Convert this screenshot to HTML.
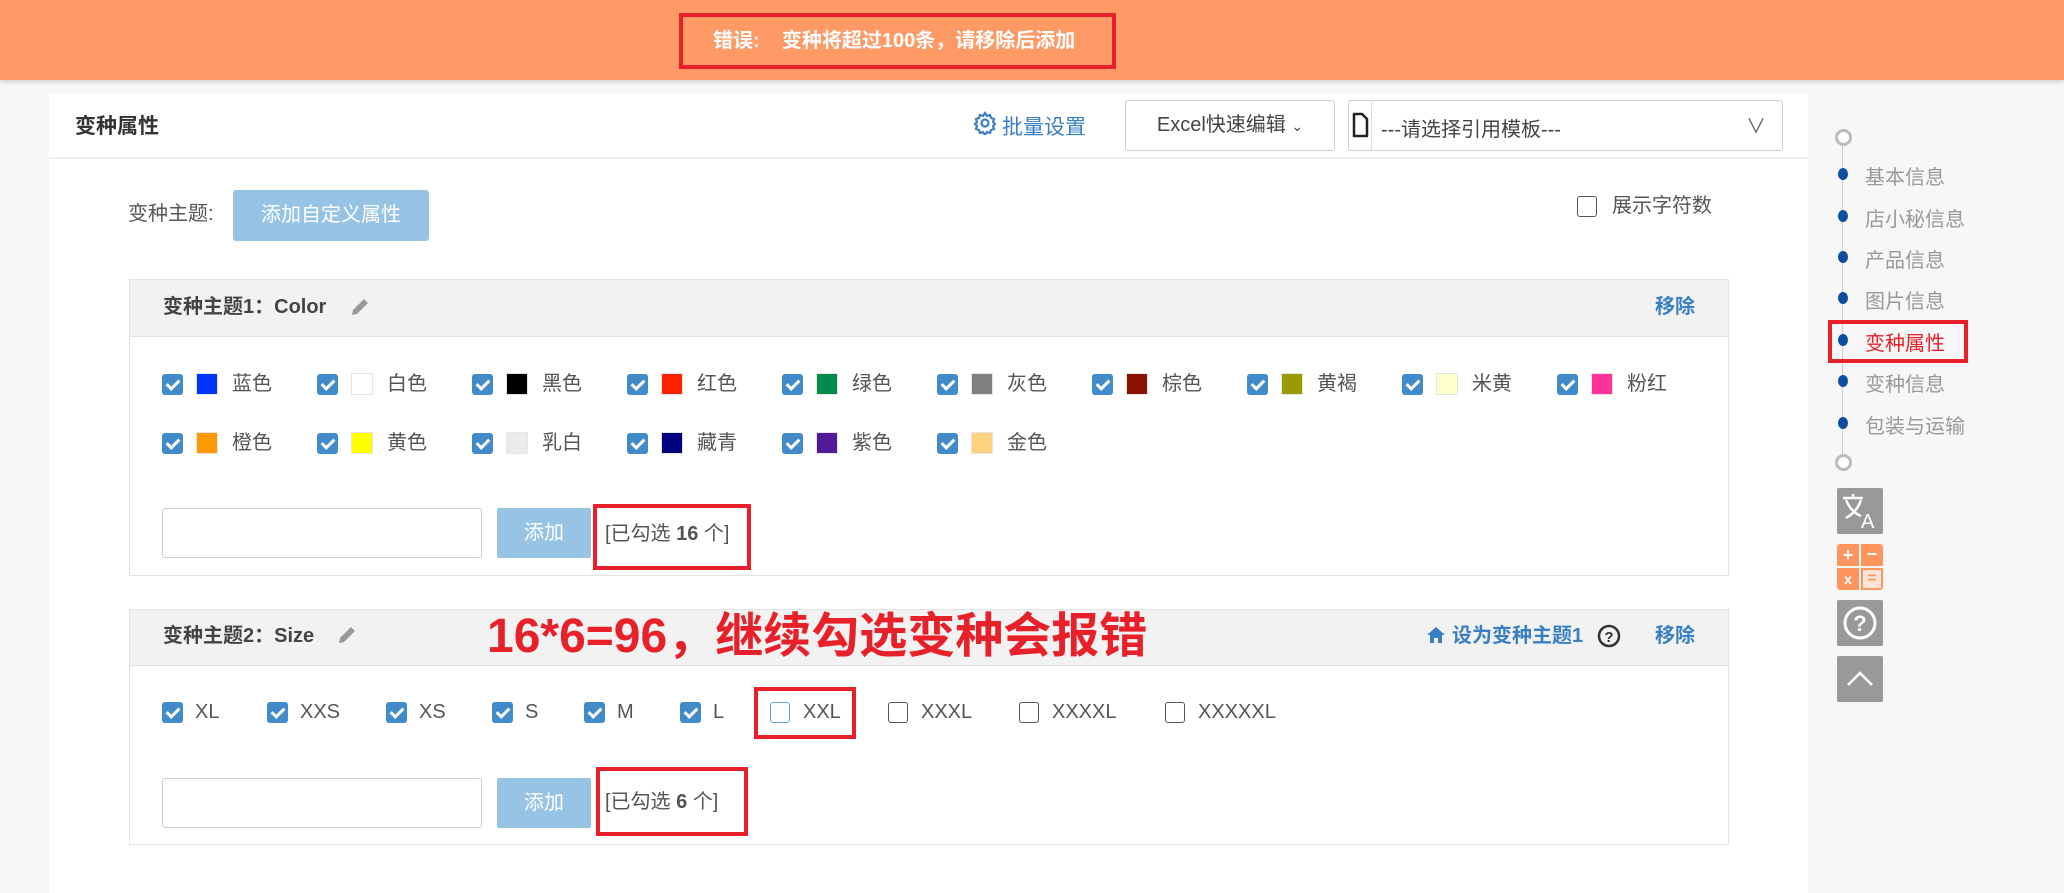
<!DOCTYPE html>
<html><head><meta charset="utf-8"><style>
*{box-sizing:border-box;margin:0;padding:0}
body{width:2064px;height:875px;overflow:hidden;background:#f7f7f7;font-family:"Liberation Sans","Noto Sans CJK SC",sans-serif;color:#555;position:relative}
.a{position:absolute;white-space:nowrap}
.top{left:0;top:0;width:2064px;height:80px;background:#ff9966;box-shadow:0 2px 4px rgba(0,0,0,.15)}
.err{left:679px;top:13px;width:437px;height:56px;border:4px solid #e8202a;color:#fff;font-size:20px;line-height:48px;padding-left:30px;font-weight:bold}
.panel{left:49px;top:93px;width:1759px;height:800px;background:#fff}
.cb{position:absolute;width:21px;height:21px;border-radius:3px;background:#428bca}
.cb::after{content:"";position:absolute;left:7px;top:3px;width:5px;height:10px;border:solid #fff;border-width:0 3px 3px 0;transform:rotate(45deg)}
.ub{position:absolute;width:20px;height:21px;border:1.5px solid #555;border-radius:3px;background:#fff}
.sw{position:absolute;width:22px;height:22px;border:1px solid #e5e5e5}
.t{position:absolute;font-size:20px;color:#555;line-height:22px}
.sec{position:absolute;border:1px solid #e3e3e3;background:#fff}
.sh{position:absolute;left:0;top:0;right:0;background:#f2f2f2;border-bottom:1px solid #e3e3e3}
.blue{color:#3a7fc4}
.inp{position:absolute;width:320px;height:50px;border:1px solid #ccc;border-radius:3px}
.btn{position:absolute;width:94px;height:50px;background:#97c4e4;color:#fff;font-size:20px;text-align:center;line-height:50px;border-radius:2px}
.red{position:absolute;border:4px solid #e8202a}
.nav{position:absolute;font-size:20px;color:#999}
.dot{position:absolute;width:10px;height:12px;border-radius:50%;background:#0d4f9e}
.ic{position:absolute;left:1837px;width:46px;height:46px;background:#999;border-radius:2px}
</style></head><body>
<div class="a top"></div>
<div class="a err">错误:&nbsp;&nbsp;&nbsp; 变种将超过100条，请移除后添加</div>
<div class="a panel"></div>
<div class="a" style="left:49px;top:157px;width:1759px;height:2px;background:#eee"></div>
<div class="a" style="left:75px;top:110px;font-size:21px;font-weight:bold;color:#333">变种属性</div>
<svg class="a" style="left:973px;top:111px" width="24" height="24" viewBox="0 0 24 24" fill="none" stroke="#3a7fc4" stroke-width="2.2"><circle cx="12" cy="12" r="3.5"/><path d="M12 2l2 3 3-1 1 3 3 1-1 3 2 2-2 2 1 3-3 1-1 3-3-1-2 3-2-3-3 1-1-3-3-1 1-3-2-2 2-2-1-3 3-1 1-3 3 1z"/></svg>
<div class="a blue" style="left:1002px;top:111px;font-size:21px">批量设置</div>
<div class="a" style="left:1125px;top:100px;width:210px;height:51px;border:1px solid #ccc;border-radius:3px;font-size:20px;color:#444;line-height:49px;text-align:center">Excel快速编辑 <span style="font-size:14px">&#8964;</span></div>
<div class="a" style="left:1348px;top:100px;width:435px;height:51px;border:1px solid #ccc;border-radius:3px"></div>
<div class="a" style="left:1371px;top:100px;width:1px;height:51px;background:#ddd"></div>
<svg class="a" style="left:1350px;top:111px" width="20" height="28" viewBox="0 0 20 28"><path d="M4 3h8l5 5v17H4z" fill="none" stroke="#222" stroke-width="2.5" stroke-linejoin="round"/></svg>
<div class="a" style="left:1381px;top:113px;font-size:20px;color:#444">---请选择引用模板---</div>
<div class="a" style="left:1746px;top:110px;font-size:20px;color:#666">∨</div>

<div class="t" style="left:128px;top:203px;color:#555">变种主题:</div>
<div class="a" style="left:233px;top:190px;width:196px;height:51px;background:#97c4e4;border-radius:3px;color:#fff;font-size:20px;line-height:51px;text-align:center">添加自定义属性</div>
<div class="ub" style="left:1577px;top:196px"></div>
<div class="t" style="left:1612px;top:195px">展示字符数</div>

<div class="sec" style="left:129px;top:279px;width:1600px;height:297px">
<div class="sh" style="height:57px"></div>
</div>
<div class="a" style="left:163px;top:295px;font-size:20px;font-weight:bold;color:#444;line-height:24px">变种主题1：Color</div>
<svg class="a" style="left:349px;top:296px" width="22" height="22" viewBox="0 0 22 22"><path d="M3 19l1-5L15 3l4 4L8 18z" fill="#999"/></svg>
<div class="a blue" style="left:1655px;top:295px;font-size:20px;font-weight:bold;line-height:24px">移除</div>

<div class="sec" style="left:129px;top:609px;width:1600px;height:236px">
<div class="sh" style="height:56px"></div>
</div>
<div class="a" style="left:163px;top:624px;font-size:20px;font-weight:bold;color:#444;line-height:24px">变种主题2：Size</div>
<svg class="a" style="left:336px;top:624px" width="22" height="22" viewBox="0 0 22 22"><path d="M3 19l1-5L15 3l4 4L8 18z" fill="#999"/></svg>
<div class="a" style="left:487px;top:606px;font-size:48px;line-height:62px;font-weight:bold;color:#e8202a">16*6=96，继续勾选变种会报错</div>
<svg class="a" style="left:1425px;top:624px" width="22" height="22" viewBox="0 0 22 22"><path d="M2 11L11 3l9 8h-3v8h-4v-5h-4v5H5v-8z" fill="#3a7fc4"/></svg>
<div class="a blue" style="left:1452px;top:624px;font-size:20px;font-weight:bold;line-height:24px">设为变种主题1</div>
<svg class="a" style="left:1597px;top:624px" width="24" height="24" viewBox="0 0 24 24"><circle cx="12" cy="12" r="10" fill="none" stroke="#333" stroke-width="2.5"/><text x="12" y="18" font-size="15" font-weight="bold" text-anchor="middle" fill="#333" font-family="Liberation Sans">?</text></svg>
<div class="a blue" style="left:1655px;top:624px;font-size:20px;font-weight:bold;line-height:24px">移除</div>

<div class="cb" style="left:162px;top:374px"></div><div class="sw" style="left:196px;top:373px;background:#0033ff"></div><div class="t" style="left:232px;top:373px">蓝色</div>
<div class="cb" style="left:317px;top:374px"></div><div class="sw" style="left:351px;top:373px;background:#fff"></div><div class="t" style="left:387px;top:373px">白色</div>
<div class="cb" style="left:472px;top:374px"></div><div class="sw" style="left:506px;top:373px;background:#000"></div><div class="t" style="left:542px;top:373px">黑色</div>
<div class="cb" style="left:627px;top:374px"></div><div class="sw" style="left:661px;top:373px;background:#ff2200"></div><div class="t" style="left:697px;top:373px">红色</div>
<div class="cb" style="left:782px;top:374px"></div><div class="sw" style="left:816px;top:373px;background:#008c4a"></div><div class="t" style="left:852px;top:373px">绿色</div>
<div class="cb" style="left:937px;top:374px"></div><div class="sw" style="left:971px;top:373px;background:#7f7f7f"></div><div class="t" style="left:1007px;top:373px">灰色</div>
<div class="cb" style="left:1092px;top:374px"></div><div class="sw" style="left:1126px;top:373px;background:#8b1100"></div><div class="t" style="left:1162px;top:373px">棕色</div>
<div class="cb" style="left:1247px;top:374px"></div><div class="sw" style="left:1281px;top:373px;background:#999900"></div><div class="t" style="left:1317px;top:373px">黄褐</div>
<div class="cb" style="left:1402px;top:374px"></div><div class="sw" style="left:1436px;top:373px;background:#ffffcc"></div><div class="t" style="left:1472px;top:373px">米黄</div>
<div class="cb" style="left:1557px;top:374px"></div><div class="sw" style="left:1591px;top:373px;background:#ff3399"></div><div class="t" style="left:1627px;top:373px">粉红</div>
<div class="cb" style="left:162px;top:433px"></div><div class="sw" style="left:196px;top:432px;background:#ff9900"></div><div class="t" style="left:232px;top:432px">橙色</div>
<div class="cb" style="left:317px;top:433px"></div><div class="sw" style="left:351px;top:432px;background:#ffff00"></div><div class="t" style="left:387px;top:432px">黄色</div>
<div class="cb" style="left:472px;top:433px"></div><div class="sw" style="left:506px;top:432px;background:#ebebeb"></div><div class="t" style="left:542px;top:432px">乳白</div>
<div class="cb" style="left:627px;top:433px"></div><div class="sw" style="left:661px;top:432px;background:#000080"></div><div class="t" style="left:697px;top:432px">藏青</div>
<div class="cb" style="left:782px;top:433px"></div><div class="sw" style="left:816px;top:432px;background:#551a99"></div><div class="t" style="left:852px;top:432px">紫色</div>
<div class="cb" style="left:937px;top:433px"></div><div class="sw" style="left:971px;top:432px;background:#ffd27f"></div><div class="t" style="left:1007px;top:432px">金色</div>

<div class="inp" style="left:162px;top:508px"></div>
<div class="btn" style="left:497px;top:508px">添加</div>
<div class="t" style="left:605px;top:523px">[已勾选 <b>16</b> 个]</div>
<div class="red" style="left:593px;top:504px;width:158px;height:66px"></div>

<div class="cb" style="left:162px;top:702px"></div><div class="t" style="left:195px;top:701px">XL</div>
<div class="cb" style="left:267px;top:702px"></div><div class="t" style="left:300px;top:701px">XXS</div>
<div class="cb" style="left:386px;top:702px"></div><div class="t" style="left:419px;top:701px">XS</div>
<div class="cb" style="left:492px;top:702px"></div><div class="t" style="left:525px;top:701px">S</div>
<div class="cb" style="left:584px;top:702px"></div><div class="t" style="left:617px;top:701px">M</div>
<div class="cb" style="left:680px;top:702px"></div><div class="t" style="left:713px;top:701px">L</div>
<div class="ub" style="left:770px;top:702px;border-color:#6aa0d8;border-width:1px"></div><div class="t" style="left:803px;top:701px">XXL</div>
<div class="ub" style="left:888px;top:702px"></div><div class="t" style="left:921px;top:701px">XXXL</div>
<div class="ub" style="left:1019px;top:702px"></div><div class="t" style="left:1052px;top:701px">XXXXL</div>
<div class="ub" style="left:1165px;top:702px"></div><div class="t" style="left:1198px;top:701px">XXXXXL</div>
<div class="red" style="left:754px;top:687px;width:102px;height:52px"></div>

<div class="inp" style="left:162px;top:778px"></div>
<div class="btn" style="left:497px;top:778px">添加</div>
<div class="t" style="left:605px;top:791px">[已勾选 <b>6</b> 个]</div>
<div class="red" style="left:596px;top:767px;width:152px;height:69px"></div>

<div class="a" style="left:1842px;top:140px;width:1px;height:320px;background:#ccc"></div>
<div class="a" style="left:1835px;top:129px;width:17px;height:17px;border-radius:50%;border:3px solid #bbb;background:#fff"></div>
<div class="dot" style="left:1838px;top:168px"></div><div class="nav" style="left:1865px;top:161px">基本信息</div>
<div class="dot" style="left:1838px;top:210px"></div><div class="nav" style="left:1865px;top:203px">店小秘信息</div>
<div class="dot" style="left:1838px;top:251px"></div><div class="nav" style="left:1865px;top:244px">产品信息</div>
<div class="dot" style="left:1838px;top:292px"></div><div class="nav" style="left:1865px;top:285px">图片信息</div>
<div class="dot" style="left:1838px;top:334px"></div><div class="nav" style="left:1865px;top:327px;color:#e8202a">变种属性</div>
<div class="red" style="left:1828px;top:320px;width:140px;height:43px"></div>
<div class="dot" style="left:1838px;top:375px"></div><div class="nav" style="left:1865px;top:368px">变种信息</div>
<div class="dot" style="left:1838px;top:417px"></div><div class="nav" style="left:1865px;top:410px">包装与运输</div>
<div class="a" style="left:1835px;top:454px;width:17px;height:17px;border-radius:50%;border:3px solid #bbb;background:#fff"></div>

<div class="ic" style="top:488px"><svg width="46" height="46" viewBox="0 0 46 46" fill="none" stroke="#fff" stroke-width="2.5"><path d="M6 10h20M16 6v4M9 12q5 12 15 16M24 12q-4 12-15 18"/><text x="24" y="40" font-size="20" fill="#fff" stroke="none" font-family="Liberation Sans">A</text></svg></div>
<div class="a" style="left:1837px;top:544px;width:46px;height:46px;border-radius:3px;overflow:hidden">
<div class="a" style="left:0;top:0;width:22px;height:22px;background:#ff955e;color:#fff;font-size:18px;font-weight:bold;text-align:center;line-height:22px">+</div>
<div class="a" style="left:24px;top:0;width:22px;height:22px;background:#ff955e;color:#fff;font-size:18px;font-weight:bold;text-align:center;line-height:20px">−</div>
<div class="a" style="left:0;top:24px;width:22px;height:22px;background:#ff955e;color:#fff;font-size:14px;font-weight:bold;text-align:center;line-height:22px">x</div>
<div class="a" style="left:24px;top:24px;width:22px;height:22px;background:#fde4d6;border:2px solid #ff955e;color:#ff955e;font-size:16px;font-weight:bold;text-align:center;line-height:18px">=</div>
</div>
<div class="ic" style="top:600px"><svg width="46" height="46" viewBox="0 0 46 46"><circle cx="23" cy="23" r="15" fill="none" stroke="#fff" stroke-width="3"/><text x="23" y="31" font-size="22" font-weight="bold" text-anchor="middle" fill="#fff" font-family="Liberation Sans">?</text></svg></div>
<div class="ic" style="top:656px"><svg width="46" height="46" viewBox="0 0 46 46"><path d="M11 29l12-12 12 12" fill="none" stroke="#fff" stroke-width="2.5"/></svg></div>
</body></html>
